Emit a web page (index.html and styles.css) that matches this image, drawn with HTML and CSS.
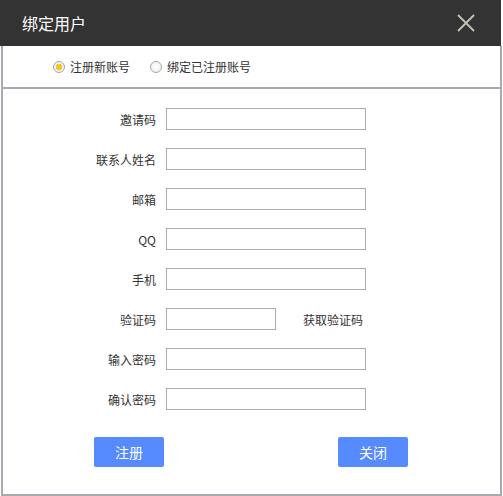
FILE: index.html
```html
<!DOCTYPE html>
<html lang="zh">
<head>
<meta charset="utf-8">
<title>绑定用户</title>
<link rel="stylesheet" href="styles.css">
</head>
<body>
<div class="dialog">
  <div class="header">
    <span class="title">绑定用户</span>
    <span class="close">
      <svg width="18" height="18" viewBox="0 0 18 18"><path d="M1 1 L17 17 M17 1 L1 17" stroke="#c4c4b6" stroke-width="1.8" fill="none"/></svg>
    </span>
  </div>
  <div class="frame">
    <div class="tabs">
      <label class="radio"><span class="dot checked"></span>注册新账号</label>
      <label class="radio"><span class="dot"></span>绑定已注册账号</label>
    </div>
    <div class="form">
      <div class="row"><span class="lbl">邀请码</span><span class="input"></span></div>
      <div class="row"><span class="lbl">联系人姓名</span><span class="input"></span></div>
      <div class="row"><span class="lbl">邮箱</span><span class="input"></span></div>
      <div class="row"><span class="lbl">QQ</span><span class="input"></span></div>
      <div class="row"><span class="lbl">手机</span><span class="input"></span></div>
      <div class="row"><span class="lbl">验证码</span><span class="input short"></span><span class="getcode">获取验证码</span></div>
      <div class="row"><span class="lbl">输入密码</span><span class="input"></span></div>
      <div class="row"><span class="lbl">确认密码</span><span class="input"></span></div>
      <div class="buttons">
        <span class="btn">注册</span>
        <span class="btn close-btn">关闭</span>
      </div>
    </div>
  </div>
</div>
</body>
</html>
```
FILE: styles.css
```css
* { box-sizing: border-box; }
body {
  margin: 0;
  background: #fff;
  font-family: "Noto Sans CJK SC", "Liberation Sans", sans-serif;
  color: #333;
}
.dialog {
  width: 502px;
}
.header {
  height: 46px;
  width: 501px;
  background: #333333;
  display: flex;
  align-items: center;
  justify-content: space-between;
  padding: 0 25px 0 22px;
}
.title {
  color: #fff;
  font-size: 16px;
  line-height: 1;
}
.close {
  display: flex;
  width: 20px;
  height: 20px;
  align-items: center;
  justify-content: center;
  margin-top: -1px;
}
.frame {
  margin-left: 1px;
  width: 501px;
  border-left: 2px solid #a9a9b1;
  border-right: 2px solid #a9a9b1;
  border-bottom: 2px solid #a9a9b1;
}
.tabs {
  height: 41px;
  display: flex;
  align-items: center;
  padding-left: 50px;
  font-size: 12px;
  gap: 20px;
}
.radio {
  display: flex;
  align-items: center;
  gap: 5px;
}
.dot {
  width: 12px;
  height: 12px;
  border-radius: 50%;
  border: 1px solid #a8a8a8;
  background: radial-gradient(circle, #fff 0%, #ececec 100%);
  display: inline-block;
}
.dot.checked {
  background: radial-gradient(circle, #f3c623 0 3px, #f0f0f0 3.5px);
}
.form {
  border-top: 2px solid #a9a9b1;
  padding: 19px 0 27px 0;
  display: flex;
  flex-direction: column;
  gap: 18px;
}
.row {
  display: flex;
  align-items: center;
  height: 22px;
  font-size: 12px;
}
.lbl {
  width: 153px;
  text-align: right;
  margin-right: 10px;
}
.input {
  width: 200px;
  height: 22px;
  border: 1px solid #a9a9b7;
  background: #fff;
}
.input.short {
  width: 110px;
}
.getcode {
  margin-left: 27px;
}
.buttons {
  display: flex;
  margin-top: 9px;
  padding-left: 91px;
}
.btn {
  width: 70px;
  height: 30px;
  background: #558bff;
  color: #fff;
  border-radius: 2px;
  font-size: 14px;
  display: flex;
  align-items: center;
  justify-content: center;
}
.close-btn {
  margin-left: 174px;
}
```
